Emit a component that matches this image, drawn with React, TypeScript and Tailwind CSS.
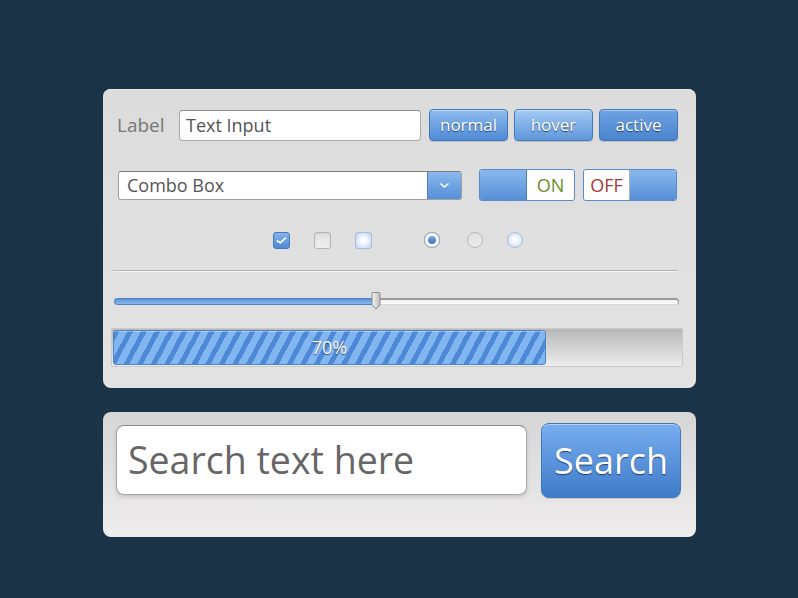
import React from "react";

const font = { fontFamily: '"Open Sans", "Noto Sans", sans-serif' };

const blueBtn =
  "flex items-center justify-center rounded-[4px] border border-[#3f78bd] text-white [text-shadow:0_1px_1px_rgba(20,40,80,0.8)] shadow-[inset_0_1px_0_rgba(255,255,255,0.45),0_1px_1px_rgba(0,0,0,0.15)]";

function Check() {
  return (
    <svg width="11" height="9" viewBox="0 0 11 9">
      <path d="M1.5 5 L4.2 6.8 L9.5 2.2" fill="none" stroke="#fff" strokeWidth="1.7" strokeLinecap="round" />
    </svg>
  );
}

function Thumb() {
  return (
    <svg width="10" height="18" viewBox="0 0 10 18">
      <defs>
        <linearGradient id="tg" x1="0" y1="0" x2="1" y2="0">
          <stop offset="0" stopColor="#f4f4f4" />
          <stop offset="1" stopColor="#bdbdbd" />
        </linearGradient>
      </defs>
      <path d="M1 1.5 Q1 0.5 2 0.5 L8 0.5 Q9 0.5 9 1.5 L9 13 L5 17 L1 13 Z" fill="url(#tg)" stroke="#8a8a8a" strokeWidth="1" />
    </svg>
  );
}

export default function App() {
  return (
    <div className="flex h-[598px] w-[798px] flex-col bg-[#1b3347] pl-[103px] pt-[89px]" style={font}>
      {/* controls panel */}
      <div className="flex h-[299px] w-[593px] flex-col rounded-[8px] bg-gradient-to-b from-[#dcdcdc] to-[#e3e3e3] shadow-[inset_0_1px_0_#ececec]">
        {/* row 1 */}
        <div className="mt-[20px] flex h-[32px] items-center pl-[14px]">
          <span className="w-[62px] text-[19px] text-[#777]">Label</span>
          <div className="flex h-[31px] w-[242px] items-center rounded-[4px] border border-[#a9a9a9] border-t-[#8c8c8c] bg-white pl-[6px] text-[18px] text-[#555]">
            Text Input
          </div>
          <div className="ml-[8px] flex gap-[6px]">
            <div className={`${blueBtn} h-[32px] w-[79px] bg-gradient-to-b from-[#8dbbee] to-[#4f8bd5] text-[17px]`}>normal</div>
            <div className={`${blueBtn} h-[32px] w-[79px] bg-gradient-to-b from-[#a3c9f3] to-[#5e97db] text-[17px]`}>hover</div>
            <div className={`${blueBtn} h-[32px] w-[79px] bg-gradient-to-b from-[#6ea2e2] to-[#4a85cf] text-[17px]`}>active</div>
          </div>
        </div>

        {/* row 2 */}
        <div className="mt-[28px] flex h-[32px] items-center pl-[15px]">
          <div className="flex h-[29px] w-[344px] overflow-hidden rounded-[3px] border border-[#a0a0a0] border-t-[#7e7e7e] bg-white">
            <div className="flex flex-1 items-center pl-[8px] text-[18px] text-[#555]">Combo Box</div>
            <div className="flex w-[34px] items-center justify-center border-l border-[#4a80c2] bg-gradient-to-b from-[#8ab8ec] to-[#5590d8]">
              <svg width="11" height="7" viewBox="0 0 11 7">
                <path d="M1.5 1.5 L5.5 5 L9.5 1.5" fill="none" stroke="#fff" strokeWidth="1.5" />
              </svg>
            </div>
          </div>
          <div className="ml-[17px] flex h-[32px] w-[96px] overflow-hidden rounded-[3px] border border-[#5a8bc8]">
            <div className="w-[47px] border-r border-[#4a80c2] bg-gradient-to-b from-[#8ab8ec] to-[#5590d8]" />
            <div className="flex flex-1 items-center justify-center bg-white text-[18px] text-[#6b8e2a]">ON</div>
          </div>
          <div className="ml-[8px] flex h-[32px] w-[94px] overflow-hidden rounded-[3px] border border-[#5a8bc8]">
            <div className="flex w-[46px] items-center justify-center border-r border-[#b0b0b0] bg-white text-[18px] text-[#a33a3a]">OFF</div>
            <div className="flex-1 bg-gradient-to-b from-[#8ab8ec] to-[#5590d8]" />
          </div>
        </div>

        {/* row 3: checkboxes and radios */}
        <div className="mt-[31px] flex h-[16px] items-center pl-[170px]">
          <div className="flex h-[17px] w-[17px] items-center justify-center rounded-[3px] border border-[#4679bb] bg-gradient-to-b from-[#86b4ea] to-[#4f89d2]">
            <Check />
          </div>
          <div className="ml-[24px] h-[17px] w-[17px] rounded-[3px] border border-[#b5b5b5] bg-gradient-to-b from-[#e2e2e2] to-[#efefef] shadow-[inset_0_1px_2px_rgba(0,0,0,0.08)]" />
          <div className="ml-[24px] h-[17px] w-[17px] rounded-[3px] border border-[#a9bcd6] bg-[radial-gradient(circle_at_50%_50%,#ffffff_0%,#f2f7ff_35%,#b9d2f2_100%)]" />
          <div className="ml-[52px] flex h-[16px] w-[16px] items-center justify-center rounded-full border border-[#7fa6d8] bg-white shadow-[0_0_1px_rgba(0,0,0,0.2)]">
            <div className="h-[8px] w-[8px] rounded-full bg-gradient-to-b from-[#7aaae6] to-[#3d74c0]" />
          </div>
          <div className="ml-[27px] h-[16px] w-[16px] rounded-full border border-[#b8b8b8] bg-gradient-to-b from-[#e0e0e0] to-[#ededed]" />
          <div className="ml-[24px] h-[16px] w-[16px] rounded-full border border-[#a9bcd6] bg-[radial-gradient(circle_at_50%_50%,#ffffff_0%,#f2f7ff_35%,#b9d2f2_100%)]" />
        </div>

        {/* divider */}
        <div className="ml-[10px] mt-[22px] h-[2px] w-[565px] border-t border-b border-t-[#b3b3b3] border-b-[#f3f3f3]" />

        {/* slider */}
        <div className="relative ml-[11px] mt-[21px] h-[17px] w-[565px]">
          <div className="absolute left-0 right-0 top-[5px] h-[7px] rounded-full border border-[#9c9c9c] border-t-2 border-b-[#d8d8d8] bg-gradient-to-b from-[#f0f0f0] to-[#ffffff]" />
          <div className="absolute left-0 top-[5px] h-[7px] w-[262px] rounded-l-full border border-[#4f82c2] bg-gradient-to-b from-[#5d92d8] to-[#8cbaf0]" />
          <div className="absolute left-[257px] top-[-1px]">
            <Thumb />
          </div>
        </div>

        {/* progress */}
        <div className="ml-[8px] mt-[18px] flex h-[39px] w-[572px] rounded-[2px] border border-[#c9c9c9] bg-gradient-to-b from-[#b8b8b8] to-[#ededed] p-[1px]">
          <div className="flex h-full w-[433px] items-center justify-center rounded-[3px] border border-[#4f84c6] bg-[repeating-linear-gradient(-62deg,#82b6f0_0px,#82b6f0_7px,#4d89d6_7px,#4d89d6_12px)] text-[18px] text-white shadow-[inset_0_1px_0_rgba(255,255,255,0.35)] [text-shadow:0_1px_1px_rgba(20,40,80,0.8)]">
            70%
          </div>
        </div>
      </div>

      {/* search panel */}
      <div className="mt-[24px] flex h-[125px] w-[593px] items-start rounded-[8px] bg-gradient-to-b from-[#d6d6d6] to-[#efeded] pl-[13px]">
        <div className="mt-[13px] flex h-[70px] w-[411px] items-center rounded-[8px] border border-[#a8a8a8] border-t-[#8a8a8a] bg-white pl-[11px] text-[37.5px] text-[#666] shadow-[0_2px_4px_rgba(0,0,0,0.15)]">
          Search text here
        </div>
        <div className={`${blueBtn} ml-[14px] mt-[11px] h-[75px] w-[140px] rounded-[8px] bg-gradient-to-b from-[#78aef0] to-[#3f7bc8] text-[36px] [text-shadow:0_1px_1px_rgba(20,40,80,0.6)]`}>
          Search
        </div>
      </div>
    </div>
  );
}
